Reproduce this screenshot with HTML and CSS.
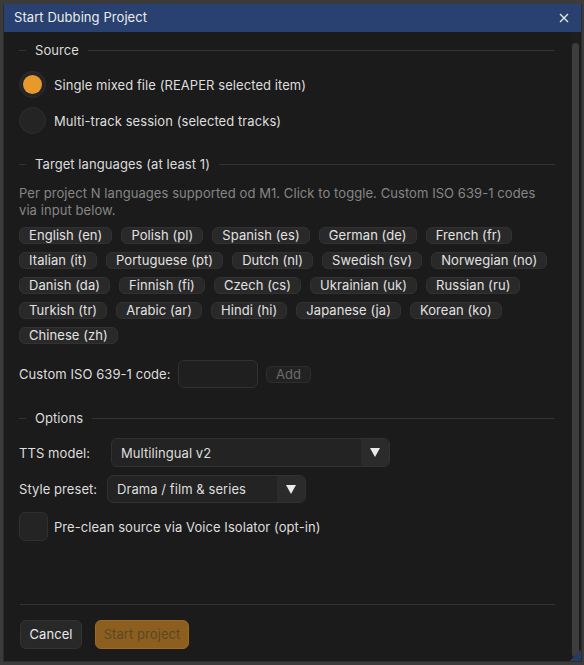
FILE: index.html
```html
<!DOCTYPE html>
<html lang="en">
<head>
  <meta charset="UTF-8" />
  <title>Start Dubbing Project</title>
  <link rel="stylesheet" href="styles.css">
</head>
<body>
  <div class="window">
    <div class="titlebar">
      <span class="title">Start Dubbing Project</span>
      <svg class="close" width="10" height="10" viewBox="0 0 10 10">
        <path d="M1 1L9 9M9 1L1 9" stroke="#e6e6e6" stroke-width="1.4" />
      </svg>
    </div>

    <div class="body">
      <div class="content">
        <div class="sep-text sep-source"><span>Source</span></div>

        <label class="radio-row first">
          <span class="radio on"></span>
          <span>Single mixed file (REAPER selected item)</span>
        </label>
        <label class="radio-row">
          <span class="radio"></span>
          <span>Multi-track session (selected tracks)</span>
        </label>

        <div class="sep-text sep-langs"><span>Target languages (at least 1)</span></div>

        <p class="hint">Per project N languages supported od M1. Click to toggle. Custom ISO 639-1 codes via input below.</p>

        <div class="chips">
          <span class="chip">English (en)</span>
          <span class="chip">Polish (pl)</span>
          <span class="chip">Spanish (es)</span>
          <span class="chip">German (de)</span>
          <span class="chip">French (fr)</span>
          <span class="chip">Italian (it)</span>
          <span class="chip">Portuguese (pt)</span>
          <span class="chip">Dutch (nl)</span>
          <span class="chip">Swedish (sv)</span>
          <span class="chip">Norwegian (no)</span>
          <span class="chip">Danish (da)</span>
          <span class="chip">Finnish (fi)</span>
          <span class="chip">Czech (cs)</span>
          <span class="chip">Ukrainian (uk)</span>
          <span class="chip">Russian (ru)</span>
          <span class="chip">Turkish (tr)</span>
          <span class="chip">Arabic (ar)</span>
          <span class="chip">Hindi (hi)</span>
          <span class="chip">Japanese (ja)</span>
          <span class="chip">Korean (ko)</span>
          <span class="chip">Chinese (zh)</span>
        </div>

        <div class="custom-row">
          <span class="custom-label">Custom ISO 639-1 code:</span>
          <span class="text-input"></span>
          <span class="add-btn">Add</span>
        </div>

        <div class="sep-text sep-options"><span>Options</span></div>

        <div class="field-row tts-row">
          <span class="field-label tts-label">TTS model:</span>
          <div class="combo tts-combo">
            <span class="combo-value">Multilingual v2</span>
            <span class="combo-arrow"></span>
          </div>
        </div>
        <div class="field-row style-row">
          <span class="field-label style-label">Style preset:</span>
          <div class="combo style-combo">
            <span class="combo-value">Drama / film &amp; series</span>
            <span class="combo-arrow"></span>
          </div>
        </div>

        <label class="check-row">
          <span class="checkbox"></span>
          <span>Pre-clean source via Voice Isolator (opt-in)</span>
        </label>

        <div class="footer">
          <div class="footer-line"></div>
          <div class="buttons">
            <span class="btn cancel">Cancel</span>
            <span class="btn start">Start project</span>
          </div>
        </div>
      </div>

      <div class="scrollbar"><div class="grab"></div></div>
    </div>
    <div class="grip"></div>
  </div>
</body>
</html>
```

FILE: styles.css
```css
* {
  box-sizing: border-box;
}
html, body {
  margin: 0;
  height: 100%;
}
body {
  background: #3b3b3b;
  font-family: Inter, "Noto Sans", sans-serif;
  font-size: 13px;
  letter-spacing: 0.07px;
  color: #dedede;
  padding: 4px 2px 3px 3px;
  overflow: hidden;
}

.window {
  position: relative;
  height: 658px;
  background: #1b1b1b;
  display: flex;
  flex-direction: column;
  border: 1px solid #2c2c2c;
  border-top: 0;
}
.titlebar {
  height: 28px;
  flex: none;
  background: #294170;
  display: flex;
  align-items: center;
  justify-content: space-between;
  padding: 0 12px 3px 10px;
}
.title {
  color: #ececec;
}
.close {
  display: block;
  margin-top: 3px;
}

.body {
  flex: 1;
  display: flex;
  min-height: 0;
}
.content {
  flex: 1;
  padding: 10px 16px 12px 15px;
  display: flex;
  flex-direction: column;
}

/* separator with a label on the line */
.sep-text {
  display: flex;
  align-items: center;
  height: 16px;
  color: #dcdcdc;
}
.sep-text::before {
  content: "";
  width: 7px;
  height: 1px;
  background: #333;
  margin-right: 9px;
}
.sep-text::after {
  content: "";
  flex: 1;
  height: 1px;
  background: #333;
  margin-left: 9px;
}
.sep-langs { margin-top: 22px; }
.sep-options { margin-top: 22px; }

.radio-row, .check-row {
  display: flex;
  align-items: center;
  gap: 8px;
}
.radio-row.first { margin-top: 13px; }
.radio-row + .radio-row { margin-top: 9px; }
.radio {
  width: 27px;
  height: 27px;
  border-radius: 50%;
  background: #242424;
  border: 1px solid #2e2e2e;
  display: flex;
  align-items: center;
  justify-content: center;
}
.radio.on::after {
  content: "";
  width: 19px;
  height: 19px;
  border-radius: 50%;
  background: #e8992c;
}

.hint {
  margin: 13px 0 0;
  max-width: 526px;
  line-height: 17px;
  color: #868686;
}

.chips {
  margin-top: 8px;
  display: flex;
  flex-wrap: wrap;
  gap: 8px 9px;
}
.chip {
  height: 17px;
  line-height: 15px;
  padding: 0 9px;
  background: #292929;
  border: 1px solid #313131;
  border-radius: 6px;
  color: #e2e2e2;
}

.custom-row {
  margin-top: 16px;
  display: flex;
  align-items: center;
}
.custom-label {
  width: 159px;
}
.text-input {
  width: 80px;
  height: 28px;
  background: #1f1f1f;
  border: 1px solid #323232;
  border-radius: 6px;
}
.add-btn {
  margin-left: 8px;
  width: 45px;
  height: 17px;
  line-height: 15px;
  text-align: center;
  background: #222;
  border: 1px solid #2d2d2d;
  border-radius: 5px;
  color: #6c6c6c;
}

.field-row {
  display: flex;
  align-items: center;
}
.tts-row { margin-top: 12px; }
.style-row { margin-top: 8px; }
.tts-label { width: 92px; }
.style-label { width: 88px; }
.combo {
  display: flex;
  background: #232323;
  border: 1px solid #313131;
  border-radius: 6px;
  overflow: hidden;
}
.tts-combo { width: 279px; height: 29px; }
.style-combo { width: 199px; height: 28px; }
.combo-value {
  flex: 1;
  display: flex;
  align-items: center;
  padding-left: 9px;
}
.combo-arrow {
  width: 28px;
  background: #2b2b2b;
  display: flex;
  align-items: center;
  justify-content: center;
}
.combo-arrow::after {
  content: "";
  border-left: 5px solid transparent;
  border-right: 5px solid transparent;
  border-top: 9px solid #eaeaea;
}

.check-row {
  margin-top: 9px;
  gap: 6px;
}
.checkbox {
  width: 29px;
  height: 29px;
  background: #242424;
  border: 1px solid #2f2f2f;
  border-radius: 6px;
}

.footer {
  margin-top: auto;
}
.footer-line {
  height: 1px;
  background: #333;
  margin-left: 1px;
}
.buttons {
  margin-top: 15px;
  display: flex;
  gap: 13px;
  margin-left: 1px;
}
.btn {
  height: 29px;
  line-height: 27px;
  border-radius: 6px;
  text-align: center;
}
.cancel {
  width: 62px;
  background: #282828;
  border: 1px solid #333;
  color: #eaeaea;
}
.start {
  width: 94px;
  background: #8c5f1f;
  border: 1px solid #9a6a26;
  color: #5c4627;
}

.scrollbar {
  width: 9px;
  flex: none;
  margin-right: 1px;
  padding: 11px 1px 4px 1px;
  background: #1e1e1e;
}
.grab {
  height: 100%;
  background: #3d3d3d;
  border-radius: 4px;
}

/* resize grip in the corner */
.grip {
  position: absolute;
  right: 0;
  bottom: 0;
  width: 12px;
  height: 12px;
  background: linear-gradient(135deg, transparent 50%, #263b63 50%);
}
```
